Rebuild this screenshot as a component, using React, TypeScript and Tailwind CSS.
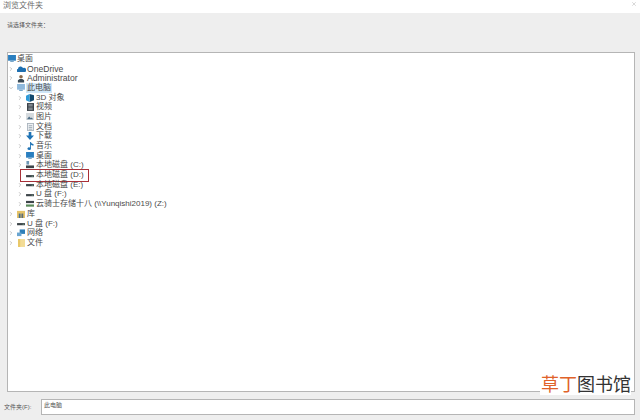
import { ChevronDown, ChevronRight, X } from "lucide-react";
import type { ReactNode } from "react";

const Monitor = ({ color = "#2a7fc0" }: { color?: string }) => (
  <svg viewBox="0 0 9 8" className="w-[8px] h-[7px]">
    <rect x="0" y="0" width="9" height="6.500" fill={color} />
    <rect x="2.500" y="6.500" width="4" height="1.500" fill="#7aa7c9" />
  </svg>
);

const Cloud = () => (
  <svg viewBox="0 0 9 8" className="w-[9px] h-[8px]">
    <path d="M1 7a1.500 1.500 0 0 1 0-3 2.600 2.600 0 0 1 5-1 2 2 0 0 1 2 4z" fill="#1e6fb0" />
  </svg>
);

const User = () => (
  <svg viewBox="0 0 9 9" className="w-[8px] h-[9px]">
    <circle cx="4.500" cy="2.500" r="2" fill="#8a6a4a" />
    <path d="M1 9V6.500L3 5h3l2 1.500V9z" fill="#3a4a55" />
  </svg>
);

const Cube = () => (
  <svg viewBox="0 0 9 9" className="w-[8px] h-[8px]">
    <path d="M4 0l5 1.500V7L4 9z" fill="#12486e" />
    <path d="M4 0L0 2v5l4 2z" fill="#2f9bd8" />
  </svg>
);

const Video = () => (
  <svg viewBox="0 0 8 9" className="w-[7px] h-[8px]">
    <rect width="8" height="9" fill="#3a4148" />
    <rect x="1.500" y="1" width="5" height="3" fill="#7d858c" />
    <rect x="1.500" y="5" width="5" height="3" fill="#7d858c" />
  </svg>
);

const Picture = () => (
  <svg viewBox="0 0 9 8" className="w-[8px] h-[7px]">
    <rect width="9" height="8" fill="#d5dade" />
    <path d="M1 7l2.500-3 2 2 1-1L8 7z" fill="#4e6e86" />
  </svg>
);

const Doc = () => (
  <svg viewBox="0 0 8 9" className="w-[7px] h-[8px]">
    <rect x="0.500" y="0.500" width="7" height="8" fill="#eef1f4" stroke="#a8b2bb" />
    <path d="M2 3h4M2 5h4M2 7h4" stroke="#9aa6b0" />
  </svg>
);

const Download = () => (
  <svg viewBox="0 0 9 9" className="w-[8px] h-[8px]">
    <path d="M3 0h3v4h3L4.500 9 0 4h3z" fill="#1f73b5" />
  </svg>
);

const Music = () => (
  <svg viewBox="0 0 8 9" className="w-[7px] h-[8px]">
    <path d="M3.500 0h1c.3 1.500 1.500 2 3 2.500V4c-1 0-2-.4-3-1v4.500a2 1.500 0 1 1-1-1.300z" fill="#1f73b5" />
  </svg>
);

const Drive = () => (
  <svg viewBox="0 0 9 8" className="w-[8px] h-[7px]">
    <rect x="0" y="3.500" width="9" height="2.500" fill="#3d4449" />
    <rect x="6.500" y="4.300" width="1" height="1" fill="#8fd0a0" />
  </svg>
);

const SystemDrive = () => (
  <svg viewBox="0 0 9 9" className="w-[8px] h-[8px]">
    <rect x="0.500" y="0" width="3" height="4" fill="#6d97b5" />
    <rect x="0" y="5" width="9" height="3" fill="#3d4449" />
  </svg>
);

const NetDrive = () => (
  <svg viewBox="0 0 9 9" className="w-[8px] h-[8px]">
    <rect x="0" y="1" width="9" height="2.500" fill="#3d4449" />
    <rect x="0" y="5" width="9" height="2.500" fill="#5a8a5a" />
  </svg>
);

const Library = () => (
  <svg viewBox="0 0 9 9" className="w-[8px] h-[8px]">
    <rect y="1" width="9" height="8" fill="#e6c368" />
    <rect x="2" y="4" width="2" height="5" fill="#47708f" />
    <rect x="5" y="4" width="2" height="5" fill="#5d6d78" />
  </svg>
);

const Network = () => (
  <svg viewBox="0 0 9 9" className="w-[8px] h-[8px]">
    <rect x="3" y="0.500" width="6" height="5" fill="#2f7fb8" />
    <rect x="0" y="4" width="5" height="4" fill="#6aa5d0" />
  </svg>
);

const Folder = () => (
  <svg viewBox="0 0 8 9" className="w-[7px] h-[8px]">
    <rect width="8" height="9" fill="#f3dc96" />
    <rect x="0" y="0" width="2.500" height="9" fill="#e9c869" />
  </svg>
);

type Item = {
  depth: number;
  label: string;
  icon: ReactNode;
  arrow?: "right" | "down";
  selected?: boolean;
  latin?: boolean;
};

const ITEMS: Item[] = [
  { depth: 0, label: "桌面", icon: <Monitor /> },
  { depth: 1, label: "OneDrive", icon: <Cloud />, arrow: "right", latin: true },
  { depth: 1, label: "Administrator", icon: <User />, arrow: "right", latin: true },
  { depth: 1, label: "此电脑", icon: <Monitor color="#8fb9dc" />, arrow: "down", selected: true },
  { depth: 2, label: "3D 对象", icon: <Cube />, arrow: "right" },
  { depth: 2, label: "视频", icon: <Video />, arrow: "right" },
  { depth: 2, label: "图片", icon: <Picture />, arrow: "right" },
  { depth: 2, label: "文档", icon: <Doc />, arrow: "right" },
  { depth: 2, label: "下载", icon: <Download />, arrow: "right" },
  { depth: 2, label: "音乐", icon: <Music />, arrow: "right" },
  { depth: 2, label: "桌面", icon: <Monitor />, arrow: "right" },
  { depth: 2, label: "本地磁盘 (C:)", icon: <SystemDrive />, arrow: "right" },
  { depth: 2, label: "本地磁盘 (D:)", icon: <Drive /> },
  { depth: 2, label: "本地磁盘 (E:)", icon: <Drive />, arrow: "right" },
  { depth: 2, label: "U 盘 (F:)", icon: <Drive />, arrow: "right" },
  { depth: 2, label: "云骑士存储十八 (\\\\Yunqishi2019) (Z:)", icon: <NetDrive />, arrow: "right" },
  { depth: 1, label: "库", icon: <Library />, arrow: "right" },
  { depth: 1, label: "U 盘 (F:)", icon: <Drive />, arrow: "right" },
  { depth: 1, label: "网络", icon: <Network />, arrow: "right" },
  { depth: 1, label: "文件", icon: <Folder />, arrow: "right" },
];

const Row = ({ item }: { item: Item }) => (
  <div className={`flex items-center h-[9.7px] ${item.depth === 2 ? "pl-[9px]" : "pl-0"}`}>
    {item.depth > 0 && (
      <span className="w-[6px] mr-[2px] flex justify-center text-[#8a8a8a]">
        {item.arrow === "right" && <ChevronRight size={6} strokeWidth={2} />}
        {item.arrow === "down" && <ChevronDown size={6} strokeWidth={2} />}
      </span>
    )}
    <span className={`flex justify-center ${item.depth > 0 ? "w-[10px]" : "w-[8px]"}`}>{item.icon}</span>
    <span
      className={`px-[1px] leading-[10px] text-[#4a4a4a] whitespace-nowrap ${
        item.latin ? "text-[8.600px]" : "text-[8px]"
      } ${item.selected ? "bg-[#cfe6f7]" : ""}`}
    >
      {item.label}
    </span>
  </div>
);

export default function App() {
  return (
    <div
      className="w-[640px] h-[420px] flex flex-col bg-white overflow-hidden"
      style={{ fontFamily: '"Liberation Sans", "Noto Sans CJK SC", sans-serif' }}
    >
      <div className="relative h-[13px] pl-[3px] text-[8px] leading-[11px] text-[#6a6a6a]">
        浏览文件夹
        <X size={6} strokeWidth={1.500} className="absolute right-[3px] top-[1px] text-[#9a9a9a]" />
      </div>
      <div className="relative flex-1 flex flex-col bg-[#eeeeee] pl-[7px] pr-[5px]">
        <div className="h-[39px] pt-[8px] text-[6px] leading-[8px] text-[#555555]">请选择文件夹：</div>
        <div className="h-[340px] border border-[#b5b5b5] bg-white pt-[1px]">
          {ITEMS.map((item, i) => (
            <div key={i} className="relative">
              <Row item={item} />
              {item.label === "本地磁盘 (D:)" && (
                <div className="absolute left-[12px] top-[-1px] w-[69px] h-[13px] border border-[#a83038]" />
              )}
            </div>
          ))}
        </div>
        <div className="flex items-center mt-[7px] -ml-[3px]">
          <span className="w-[37px] text-[6px] leading-[8px] text-[#555555]">文件夹(F):</span>
          <div className="flex-1 h-[16px] border border-[#b5b5b5] bg-white pl-[2px] text-[6px] leading-[10px] text-[#555555]">
            此电脑
          </div>
        </div>
        <div className="absolute right-[9px] bottom-[25px] h-[20px] pl-[1px] flex items-center bg-white text-[18px] leading-[20px]">
          <span className="text-[#e0622a]">草丁</span>
          <span className="text-[#333333]">图书馆</span>
        </div>
      </div>
    </div>
  );
}
